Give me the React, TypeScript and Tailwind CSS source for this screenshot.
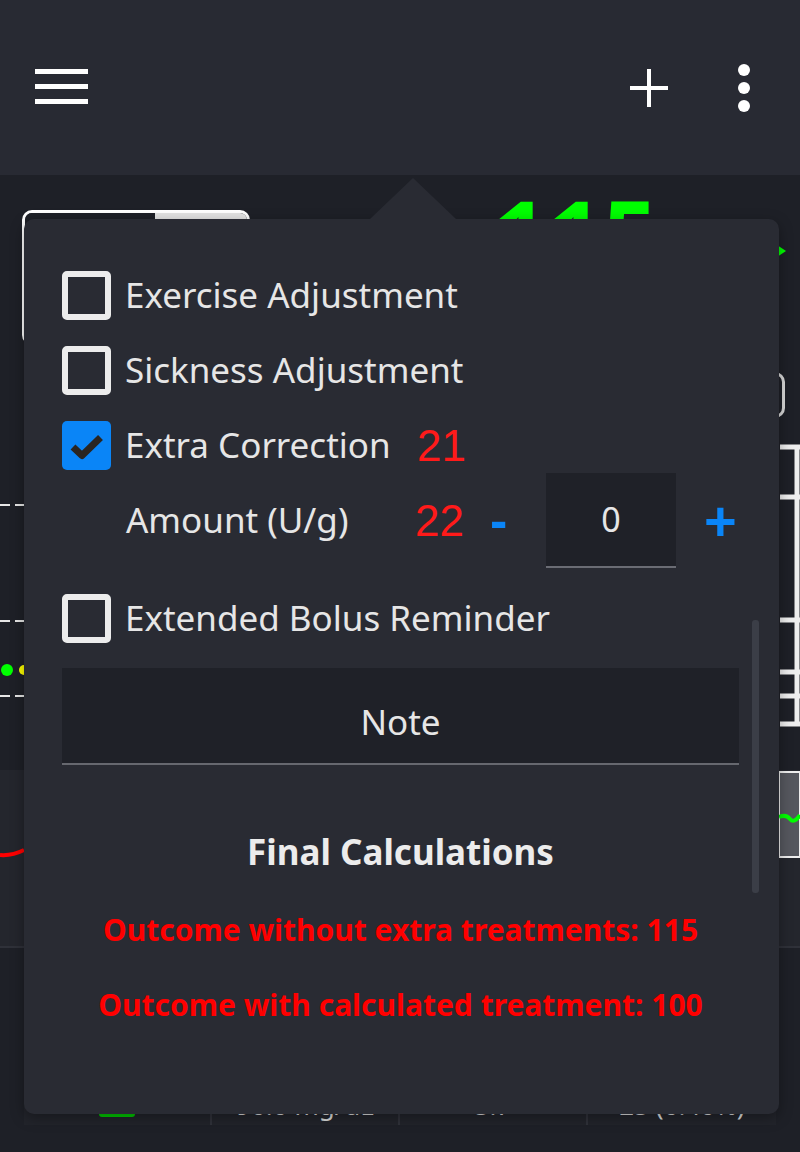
import { useState } from 'react'

const font = { fontFamily: '"Noto Sans", "Open Sans", sans-serif' }
const arial = { fontFamily: '"Liberation Sans", Arial, sans-serif' }

function Box({ checked }: { checked?: boolean }) {
  if (checked) {
    return (
      <div className="w-[49px] h-[49px] rounded-[5px] bg-[#0a85f7] shrink-0">
        <svg width="49" height="49" viewBox="0 0 49 49">
          <path d="M11 26 L20 34.5 L38.5 16.5" fill="none" stroke="#2a2521" strokeWidth="7" strokeLinejoin="round" />
        </svg>
      </div>
    )
  }
  return <div className="w-[49px] h-[49px] rounded-[5px] border-[6px] border-[#ececec] shrink-0" />
}

function Row({ label, checked, extra }: { label: string; checked?: boolean; extra?: string }) {
  return (
    <div className="h-[75px] flex items-center">
      <Box checked={checked} />
      <span className="ml-[14px] w-[292px] text-[35px] text-[#e6e6e6] whitespace-nowrap">{label}</span>
      {extra && (
        <span className="text-[44px] text-[#ff1a1a] leading-none" style={arial}>
          {extra}
        </span>
      )}
    </div>
  )
}

export default function App() {
  const [amount, setAmount] = useState(0)

  return (
    <div className="relative w-[800px] h-[1152px] overflow-hidden bg-[#1e2027]" style={font}>
      {/* Top bar */}
      <header className="h-[175px] bg-[#282a33] flex items-center justify-between pl-[35px] pr-[50px]">
        <div className="flex flex-col gap-[10px] w-[53px] -mt-[2px]">
          <div className="h-[5px] bg-white" />
          <div className="h-[5px] bg-white" />
          <div className="h-[5px] bg-white" />
        </div>
        <div className="flex items-center gap-[69px]">
          <svg width="40" height="40" viewBox="0 0 40 40">
            <path d="M20 1 V39 M1 20 H39" stroke="white" strokeWidth="4" />
          </svg>
          <div className="flex flex-col gap-[6px] items-center">
            <div className="w-[12px] h-[12px] rounded-full bg-white" />
            <div className="w-[12px] h-[12px] rounded-full bg-white" />
            <div className="w-[12px] h-[12px] rounded-full bg-white" />
          </div>
        </div>
      </header>

      {/* Main screen behind the popover */}
      <main>
        <section className="h-[265px] relative">
          <div className="flex items-start pt-[35px]">
            <div className="ml-[22px] w-[228px] h-[135px] rounded-[10px] border-[3px] border-white flex overflow-hidden">
              <div className="w-[130px] bg-[#1e2027]" />
              <div className="flex-1 bg-[#e3e3e3]" />
            </div>
            <div className="ml-[243px] -mt-[24px] text-[96px] font-bold text-[#00ff00] leading-none">115</div>
          </div>
          <div className="absolute right-[14px] top-[70px] w-0 h-0 border-y-[6px] border-y-transparent border-l-[9px] border-l-[#00ff00]" />
          <div className="absolute right-[15px] top-[197px] w-[80px] h-[46px] rounded-[10px] border-[3px] border-[#d8d8d8]" />
        </section>

        <section className="h-[330px]">
          <svg width="800" height="330" viewBox="0 0 800 330">
            <g stroke="#e6e6e6" strokeWidth="2" strokeDasharray="10 5">
              <line x1="0" y1="65" x2="780" y2="65" />
              <line x1="0" y1="181" x2="780" y2="181" />
              <line x1="0" y1="256" x2="780" y2="256" />
            </g>
            <circle cx="7" cy="230" r="6" fill="#00ff00" />
            <circle cx="24" cy="230" r="5" fill="#ffff00" />
            <g fill="none" stroke="#eeeeee" strokeWidth="5">
              <path d="M797 5 V285" />
              <path d="M780 7 H800 M780 57 H800 M780 180 H800 M780 232 H800 M780 256 H800 M780 284 H800" />
            </g>
          </svg>
        </section>

        <section className="h-[178px] bg-[#24262d] border-b-2 border-[#2f3139]">
          <svg width="800" height="178" viewBox="0 0 800 178">
            <path d="M0 85 Q12 86 24 80" fill="none" stroke="#ff0000" strokeWidth="4" />
            <rect x="779" y="2" width="21" height="85" fill="#55575e" stroke="#eeeeee" strokeWidth="2" />
            <path d="M779 47 Q786 44 790 49 T800 45" fill="none" stroke="#00ff00" strokeWidth="4" />
          </svg>
        </section>

        <section className="pt-[125px] px-[24px]">
          <div className="h-[52px] grid grid-cols-4 bg-[#22242b] text-[26px] text-[#dcdcdc]">
            <div className="flex items-end justify-center pb-[8px] border-r-2 border-[#30323a]">
              <div className="w-[36px] h-[6px] rounded-full bg-[#00c800]" />
            </div>
            <div className="flex items-end justify-center border-r-2 border-[#30323a]">90.0 mg/dL</div>
            <div className="flex items-end justify-center border-r-2 border-[#30323a]">5.7</div>
            <div className="flex items-end justify-center">25 (0.40%)</div>
          </div>
        </section>
      </main>

      {/* Popover */}
      <div className="absolute left-[24px] top-[219px] w-[755px] h-[895px] rounded-[10px] bg-[#292b33] shadow-[0_4px_14px_rgba(0,0,0,0.35)]">
        <div className="absolute left-[346px] -top-[41px] w-0 h-0 border-x-[43px] border-x-transparent border-b-[41px] border-b-[#292b33]" />
        <div className="absolute left-[728px] top-[401px] w-[7px] h-[273px] rounded-[3px] bg-[#3b3e47]" />

        <div className="pt-[39px] pl-[38px] pr-[40px] flex flex-col">
          <Row label="Exercise Adjustment" />
          <Row label="Sickness Adjustment" />
          <Row label="Extra Correction" checked extra="21" />

          <div className="h-[75px] flex items-center">
            <span className="ml-[64px] w-[289px] text-[35px] text-[#e6e6e6] whitespace-nowrap">Amount (U/g)</span>
            <span className="w-[75px] text-[44px] text-[#ff1a1a] leading-none" style={arial}>
              22
            </span>
            <button
              onClick={() => setAmount(a => a - 1)}
              className="w-[56px] text-left text-[52px] font-bold text-[#0a85f7] leading-none -mt-[2px]"
              style={arial}
            >
              -
            </button>
            <div className="w-[130px] h-[95px] bg-[#1f2128] border-b-2 border-[#6a6c74] flex items-center justify-center text-[34px] text-[#e6e6e6]">
              {amount}
            </div>
            <button
              onClick={() => setAmount(a => a + 1)}
              className="ml-[28px] text-[56px] font-bold text-[#0a85f7] leading-none"
              style={arial}
            >
              +
            </button>
          </div>

          <div className="mt-[23px]">
            <Row label="Extended Bolus Reminder" />
          </div>

          <div className="mt-[12px] h-[97px] pt-[14px] bg-[#1f2128] border-b-2 border-[#66686f] flex items-center justify-center text-[35px] text-[#e6e6e6]">
            Note
          </div>

          <div className="mt-[65px] h-[44px] flex items-center justify-center text-[35px] font-bold text-[#ececec]">
            Final Calculations
          </div>
          <div className="mt-[35px] h-[40px] flex items-center justify-center text-[30px] font-bold text-[#ff0000]">
            Outcome without extra treatments: 115
          </div>
          <div className="mt-[35px] h-[40px] flex items-center justify-center text-[30px] font-bold text-[#ff0000]">
            Outcome with calculated treatment: 100
          </div>
        </div>
      </div>
    </div>
  )
}
